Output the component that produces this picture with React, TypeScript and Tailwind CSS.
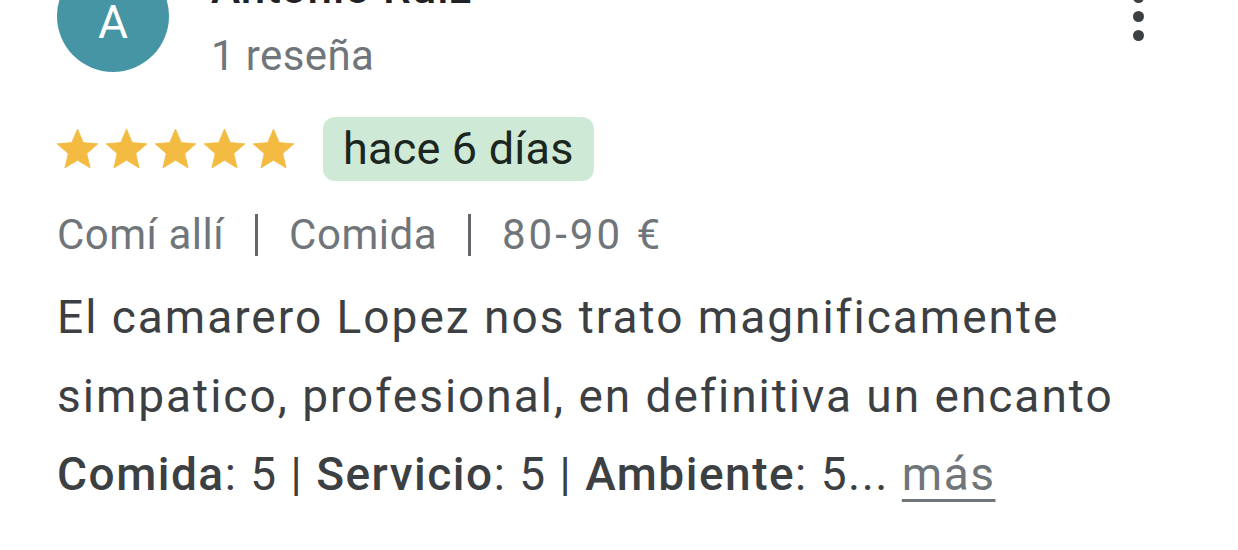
import React from "react";

const STAR = "M12 17.27L18.18 21l-1.64-7.03L22 9.24l-7.19-.61L12 2 9.19 8.63 2 9.24l5.46 4.73L5.82 21z";

function Star() {
  return (
    <svg width="49" height="49" viewBox="0 0 24 24" className="block">
      <path d={STAR} fill="#f4bb42" strokeLinejoin="round" stroke="#f4bb42" strokeWidth="0.4" />
    </svg>
  );
}

function Pipe() {
  return <div className="w-[3px] h-[42px] bg-[#63676c] mx-[31px] shrink-0" />;
}

export default function App() {
  return (
    <div
      className="w-[1238px] h-[550px] bg-white overflow-hidden"
      style={{ fontFamily: "Roboto, 'Noto Sans', Arial, sans-serif" }}
    >
      {/* header */}
      <div className="flex items-start pl-[57px] pr-[94px] mt-[-40px]">
        <div className="w-[112px] h-[112px] rounded-full bg-[#4695a5] flex items-center justify-center pt-[11px] shrink-0">
          <span className="text-white text-[46px] leading-none">A</span>
        </div>
        <div className="ml-[42px] flex flex-col">
          <div className="text-[44px] leading-[56px] font-medium text-[#202124] whitespace-nowrap tracking-[1px]">Antonio Ruiz</div>
          <div className="mt-[15px] text-[42px] leading-[50px] text-[#70757a] whitespace-nowrap tracking-[0.4px]">1 reseña</div>
        </div>
        <div className="ml-auto mt-[32px] flex flex-col gap-[8px]">
          <div className="w-[11px] h-[11px] rounded-full bg-[#3c4043]" />
          <div className="w-[11px] h-[11px] rounded-full bg-[#3c4043]" />
          <div className="w-[11px] h-[11px] rounded-full bg-[#3c4043]" />
        </div>
      </div>

      {/* stars + badge */}
      <div className="flex items-center pl-[53px] mt-[36px]">
        <div className="flex">
          <Star />
          <Star />
          <Star />
          <Star />
          <Star />
        </div>
        <div className="ml-[25px] h-[64px] px-[20px] rounded-[12px] bg-[#ceead6] flex items-center text-[45px] tracking-[0.2px] text-[#1b261e] whitespace-nowrap">
          hace 6 días
        </div>
      </div>

      {/* meta */}
      <div className="flex items-center pl-[57px] mt-[29px] h-[50px] text-[42px] leading-[50px] text-[#70757a] whitespace-nowrap tracking-[0.5px]">
        <span>Comí allí</span>
        <Pipe />
        <span>Comida</span>
        <Pipe />
        <span className="tracking-[3px]">80-90 €</span>
      </div>

      {/* body */}
      <div className="pl-[57px] mt-[18px] text-[46px] leading-[79px] tracking-[2px] text-[#3c4043] whitespace-nowrap">
        <div>El camarero Lopez nos trato magnificamente</div>
        <div>simpatico, profesional, en definitiva un encanto</div>
        <div className="leading-[76px] tracking-[1.5px]">
          <span className="font-medium">Comida</span>: 5 | <span className="font-medium">Servicio</span>: 5 |{" "}
          <span className="font-medium">Ambiente</span>: 5...{" "}
          <span className="text-[#70757a] underline decoration-[3px] underline-offset-[9px]">más</span>
        </div>
      </div>
    </div>
  );
}
